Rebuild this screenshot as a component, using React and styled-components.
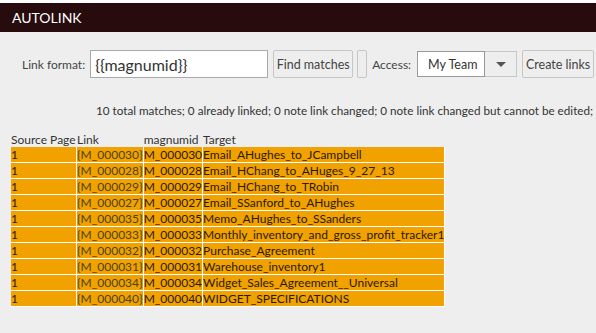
import React from 'react';
import styled, { createGlobalStyle } from 'styled-components';

const GlobalStyle = createGlobalStyle`
  html, body {
    margin: 0;
    padding: 0;
    background: #eeeeee;
    font-family: Lato, "Open Sans", sans-serif;
  }
`;

const Page = styled.div`
  width: 596px;
  height: 333px;
  overflow: hidden;
  border-top: 3px solid #ffffff;
  box-sizing: border-box;
`;

const TitleBar = styled.div`
  height: 29px;
  background-color: #270b0d;
  color: #fff;
  font-size: 14px;
  display: flex;
  align-items: center;
  padding-left: 12px;
`;

const Toolbar = styled.div`
  display: flex;
  align-items: center;
  margin-top: 18px;
  padding-left: 22px;
  height: 28px;
  white-space: nowrap;
  & > * {
    flex-shrink: 0;
  }
`;

const Label = styled.span`
  font-size: 12px;
  color: #444;
  margin-right: ${p => p.gap || 5}px;
`;

const FormatInput = styled.input`
  box-sizing: border-box;
  width: 178px;
  height: 28px;
  border: 1px solid #a9a9a9;
  background: #fff;
  font-family: Lato, sans-serif;
  font-size: 16px;
  color: #333;
  padding: 0 0 0 4px;
  margin: 0 5px 0 0;
  outline: none;
`;

const Button = styled.button`
  box-sizing: border-box;
  height: 28px;
  width: ${p => p.w}px;
  background: #eeeeee;
  border: 1px solid #c6c6c6;
  border-radius: 2px;
  font-family: Lato, sans-serif;
  font-size: 12.5px;
  color: #444;
  padding: 0;
  margin: 0 ${p => p.mr || 0}px 0 0;
  white-space: nowrap;
`;

const Select = styled.div`
  display: flex;
  height: 26px;
  box-sizing: border-box;
  margin-right: 5px;
`;

const SelectValue = styled.div`
  width: 68px;
  box-sizing: border-box;
  background: #fff;
  border: 1px solid #9a9a9a;
  font-size: 12.5px;
  color: #333;
  display: flex;
  align-items: center;
  padding-left: 10px;
`;

const SelectArrow = styled.div`
  width: 32px;
  box-sizing: border-box;
  background: #eeeeee;
  border: 1px solid #c6c6c6;
  border-left: none;
  display: flex;
  align-items: center;
  justify-content: center;
  &::after {
    content: '';
    border-left: 5px solid transparent;
    border-right: 5px solid transparent;
    border-top: 5px solid #555;
  }
`;

const Summary = styled.div`
  margin-top: 24px;
  padding-left: 96px;
  font-size: 11.7px;
  line-height: 16px;
  color: #333;
  white-space: nowrap;
`;

const Table = styled.table`
  margin: 13px 0 0 11px;
  border-collapse: separate;
  border-spacing: 0;
  font-size: 12px;
  table-layout: fixed;
`;

const Th = styled.th`
  font-weight: normal;
  text-align: left;
  color: #333;
  padding: 0;
  height: 16px;
  width: ${p => p.w}px;
  white-space: nowrap;
  border-right: 1px solid transparent;
`;

const Td = styled.td`
  background: #f1a200;
  padding: 0;
  height: 15px;
  line-height: 15px;
  white-space: nowrap;
  overflow: hidden;
  color: ${p => p.link ? '#4a4210' : '#2a1a00'};
  border-right: 1px solid #fff;
  border-bottom: 1px solid #fff;
`;

const rows = [
  ['M_000030', 'Email_AHughes_to_JCampbell'],
  ['M_000028', 'Email_HChang_to_AHuges_9_27_13'],
  ['M_000029', 'Email_HChang_to_TRobin'],
  ['M_000027', 'Email_SSanford_to_AHughes'],
  ['M_000035', 'Memo_AHughes_to_SSanders'],
  ['M_000033', 'Monthly_inventory_and_gross_profit_tracker1'],
  ['M_000032', 'Purchase_Agreement'],
  ['M_000031', 'Warehouse_inventory1'],
  ['M_000034', 'Widget_Sales_Agreement__Universal'],
  ['M_000040', 'WIDGET_SPECIFICATIONS'],
];

export default function App() {
  return (
    <Page>
      <GlobalStyle />
      <TitleBar>AUTOLINK</TitleBar>
      <Toolbar>
        <Label>Link format:</Label>
        <FormatInput defaultValue="{{magnumid}}" />
        <Button w={80} mr={4}>Find matches</Button>
        <Button w={10} mr={5} />
        <Label gap={6}>Access:</Label>
        <Select>
          <SelectValue>My Team</SelectValue>
          <SelectArrow />
        </Select>
        <Button w={72}>Create links</Button>
      </Toolbar>
      <Summary>
        10 total matches; 0 already linked; 0 note link changed; 0 note link changed but cannot be edited;
      </Summary>
      <Table>
        <thead>
          <tr>
            <Th w={65}>Source Page</Th>
            <Th w={65}>Link</Th>
            <Th w={58}>magnumid</Th>
            <Th w={241}>Target</Th>
          </tr>
        </thead>
        <tbody>
          {rows.map(([id, target]) => (
            <tr key={id}>
              <Td>1</Td>
              <Td link>{`{${id}}`}</Td>
              <Td>{id}</Td>
              <Td>{target}</Td>
            </tr>
          ))}
        </tbody>
      </Table>
    </Page>
  );
}
